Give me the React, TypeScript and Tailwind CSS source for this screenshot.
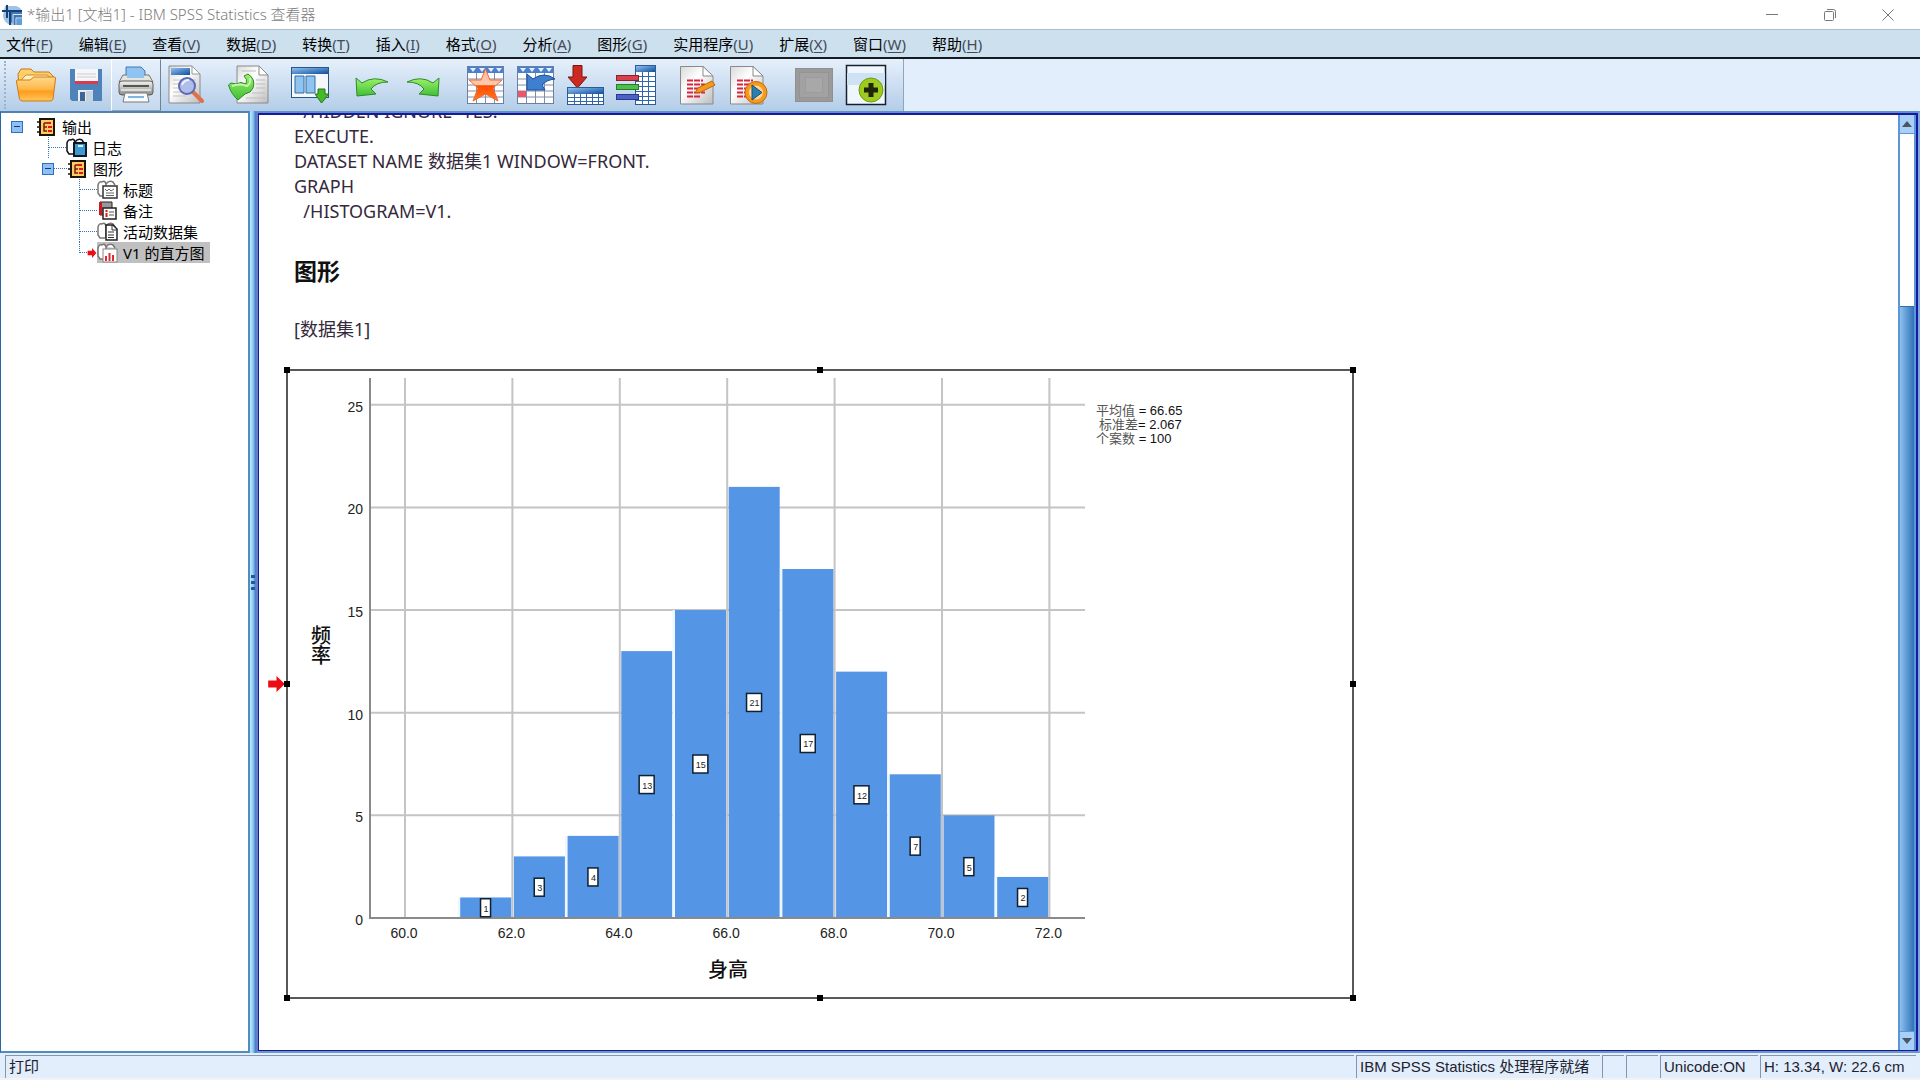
import type { ReactNode } from "react";

const UI_FONT = "font-['Noto_Sans','Noto_Sans_CJK_SC',sans-serif]";
const ARIAL_FONT = "font-['Liberation_Sans','Noto_Sans_CJK_SC',sans-serif]";

const MENUS = [
  { label: "文件", key: "F" },
  { label: "编辑", key: "E" },
  { label: "查看", key: "V" },
  { label: "数据", key: "D" },
  { label: "转换", key: "T" },
  { label: "插入", key: "I" },
  { label: "格式", key: "O" },
  { label: "分析", key: "A" },
  { label: "图形", key: "G" },
  { label: "实用程序", key: "U" },
  { label: "扩展", key: "X" },
  { label: "窗口", key: "W" },
  { label: "帮助", key: "H" },
];

const BINS = [
  { start: 61, count: 1 },
  { start: 62, count: 3 },
  { start: 63, count: 4 },
  { start: 64, count: 13 },
  { start: 65, count: 15 },
  { start: 66, count: 21 },
  { start: 67, count: 17 },
  { start: 68, count: 12 },
  { start: 69, count: 7 },
  { start: 70, count: 5 },
  { start: 71, count: 2 },
];

export default function App(): JSX.Element {
  return (
    <div className={`flex h-screen flex-col overflow-hidden bg-white text-black ${UI_FONT}`}>
      <SharedDefs />
      <TitleBar />
      <MenuBar />
      <Toolbar />
      <main className="flex min-h-0 flex-1 bg-[#cfe6fa]">
        <OutlinePane />
        <Splitter />
        <OutputPane />
      </main>
      <StatusBar />
    </div>
  );
}

function TitleBar(): JSX.Element {
  return (
    <header className="flex h-[29px] shrink-0 items-center bg-white pl-0.5">
      <AppIcon />
      <h1 className="ml-[5px] flex-1 text-[15px] font-light text-[#7d7d7d]">*输出1 [文档1] - IBM SPSS Statistics 查看器</h1>
      <div className="flex h-full pr-[3px] text-[#777]">
        <WindowButton label="最小化">
          <path d="M0 5.5h12" />
        </WindowButton>
        <WindowButton label="向下还原">
          <rect x="0.5" y="2.5" width="9" height="9" rx="1" />
          <path d="M3 0.5h6.500a2 2 0 0 1 2 2V9" />
        </WindowButton>
        <WindowButton label="关闭">
          <path d="M0.500 0.500l11 11M11.500 0.500l-11 11" />
        </WindowButton>
      </div>
    </header>
  );
}

function WindowButton({ label, children }: { label: string; children: ReactNode }): JSX.Element {
  return (
    <button type="button" aria-label={label} className="flex w-[58px] items-center justify-center">
      <svg className="h-3 w-3 overflow-visible" viewBox="0 0 12 12" fill="none" stroke="currentColor">
        {children}
      </svg>
    </button>
  );
}

function MenuBar(): JSX.Element {
  return (
    <nav className="flex h-[30px] shrink-0 items-center gap-[26px] border-t border-b-2 border-t-[#a9bdcb] border-b-[#151b22] bg-[#cde0ee] pl-1.5">
      {MENUS.map((menu) => (
        <button key={menu.key} type="button" className="text-[15px] leading-5 whitespace-nowrap">
          {menu.label}
          <span className="text-[#444a58]">
            (<span className="underline underline-offset-2">{menu.key}</span>)
          </span>
        </button>
      ))}
    </nav>
  );
}

function Toolbar(): JSX.Element {
  return (
    <div className="flex h-[52px] shrink-0 bg-[#e2eefb]">
      <div className="flex gap-3 border-r border-[#8fa5bc] bg-linear-to-b from-[#e6f0fb] to-[#b3cde8] pr-4">
        <div className="flex">
          <div className="my-0.5 ml-1 w-[7px] border-l-2 border-dotted border-[#9fb3c8]" />
          <ToolButton label="打开"><OpenIcon /></ToolButton>
          <ToolButton label="保存"><SaveIcon /></ToolButton>
          <ToolButton label="打印" raised><PrintIcon /></ToolButton>
          <ToolButton label="打印预览"><PreviewIcon /></ToolButton>
        </div>
        <ToolButton label="导出"><ExportIcon /></ToolButton>
        <ToolButton label="重新调用对话框"><RecallIcon /></ToolButton>
        <div className="flex">
          <ToolButton label="撤销"><UndoIcon /></ToolButton>
          <ToolButton label="重做"><RedoIcon /></ToolButton>
        </div>
        <div className="flex">
          <ToolButton label="转到数据"><StarGridIcon /></ToolButton>
          <ToolButton label="转到个案"><CaseIcon /></ToolButton>
          <ToolButton label="转到变量"><GotoVariableIcon /></ToolButton>
          <ToolButton label="变量"><VariablesIcon /></ToolButton>
        </div>
        <div className="flex">
          <ToolButton label="编辑语法"><EditSyntaxIcon /></ToolButton>
          <ToolButton label="运行脚本"><RunScriptIcon /></ToolButton>
        </div>
        <div className="flex pl-1">
          <ToolButton label="指定窗口"><DesignateIcon /></ToolButton>
          <ToolButton label="定制工具栏"><AddIcon /></ToolButton>
        </div>
      </div>
    </div>
  );
}

function ToolButton({ label, raised = false, children }: { label: string; raised?: boolean; children: ReactNode }): JSX.Element {
  return (
    <button
      type="button"
      aria-label={label}
      className={`flex w-[50px] items-center justify-center ${
        raised ? "border border-t-white border-r-[#6f8296] border-b-[#8fa5bc] border-l-white bg-linear-to-b from-[#e6f0fb] to-[#c6d9ed]" : ""
      }`}
    >
      <svg className="h-10 w-10 shrink-0 overflow-visible" viewBox="0 0 40 40" fill="none">
        {children}
      </svg>
    </button>
  );
}

function OutlinePane(): JSX.Element {
  return (
    <aside className="w-[250px] shrink-0 border-t-2 border-r-2 border-b-2 border-l border-t-[#4e82b4] border-r-[#4f8dbd] border-b-[#4f8dbd] border-l-[#2b68a3] bg-white pt-[3px] text-[15px]">
      <TreeRow label="输出" indent="pl-2.5" toggle icon={<BookIcon />} />
      <TreeRow label="日志" indent="pl-[47px]" line icon={<LogIcon />} />
      <TreeRow label="图形" indent="pl-[41px]" toggle line icon={<BookIcon />} />
      <TreeRow label="标题" indent="pl-[78px]" line icon={<TitleIcon />} />
      <TreeRow label="备注" indent="pl-[78px]" line icon={<NotesIcon />} />
      <TreeRow label="活动数据集" indent="pl-[78px]" line icon={<DatasetIcon />} />
      <TreeRow label="V1 的直方图" indent="pl-[78px]" line selected icon={<ChartItemIcon />} />
    </aside>
  );
}

function TreeRow({
  label,
  indent,
  icon,
  toggle = false,
  line = false,
  selected = false,
}: {
  label: string;
  indent: string;
  icon: ReactNode;
  toggle?: boolean;
  line?: boolean;
  selected?: boolean;
}): JSX.Element {
  return (
    <div className={`flex h-[21px] items-center ${indent}`}>
      {toggle ? (
        <button type="button" aria-label="折叠" className="flex h-3 w-3 shrink-0 items-center justify-center border border-[#2f6fc0] bg-[#8fc0f5]">
          <span className="h-px w-1.5 bg-[#143a70]" />
        </button>
      ) : (
        <span className={`w-px shrink-0 self-stretch border-l border-dotted border-[#2f75c4] ${selected ? "mb-2.5" : ""}`} />
      )}
      {line ? (
        <span className={`flex shrink-0 items-center justify-end ${toggle ? "w-[13px]" : "w-[17px]"}`}>
          <span className="flex-1 border-t border-dotted border-[#2f75c4]" />
          {selected ? <RedArrow className="h-2.5 w-2.5" /> : null}
        </span>
      ) : (
        <span className="w-[13px] shrink-0" />
      )}
      <span className={`flex h-[21px] items-center ${selected ? "bg-[#c0c0c0] pr-1.5" : ""}`}>
        <svg className="mr-1 h-5 w-[22px] shrink-0" viewBox="0 0 22 20" fill="none">
          {icon}
        </svg>
        <span className="leading-5 whitespace-nowrap">{label}</span>
      </span>
    </div>
  );
}

function Splitter(): JSX.Element {
  return (
    <div className="flex w-1.5 shrink-0 flex-col items-center justify-center gap-[3px] bg-linear-to-r from-[#c4e8fd] via-[#8fc8f5] to-[#3f74bd]">
      <span className="h-[3px] w-1 bg-[#24579c]" />
      <span className="h-[3px] w-1 bg-[#24579c]" />
      <span className="h-[3px] w-1 bg-[#24579c]" />
    </div>
  );
}

function OutputPane(): JSX.Element {
  return (
    <section className="flex min-w-0 flex-1 border-2 border-t-[#5f93c4] border-r-[#7fa8dc] border-b-[#6b96c6] border-l-[#5f7fc8]">
      <div className="flex min-w-0 flex-1 border border-t-2 border-r-2 border-[#1717a4] bg-white">
        <div className="min-w-0 flex-1 overflow-hidden pl-2">
          <div className="-mt-4 pl-[27px] text-[18px] leading-[25px] text-[#35293b]">
            <pre className={UI_FONT}>{`  /HIDDEN IGNORE=YES.
EXECUTE.
DATASET NAME 数据集1 WINDOW=FRONT.
GRAPH
  /HISTOGRAM=V1.`}</pre>
            <h2 className="mt-[31px] text-[23px] leading-8 font-bold text-[#111]">图形</h2>
            <p className="mt-[30px]">[数据集1]</p>
          </div>
          <div className="mt-[27px] flex items-center">
            <RedArrow className="h-4 w-[19px] shrink-0" />
            <Histogram />
          </div>
        </div>
        <ScrollBar />
      </div>
    </section>
  );
}

// Plot area in chart units: 60.0 sits at x=119, zero at y=549.
const scaleX = (value: number) => 119 + (value - 60) * 53.7;
const scaleY = (count: number) => 549 - count * 20.53;

function Histogram(): JSX.Element {
  const xTicks = [60, 62, 64, 66, 68, 70, 72];
  const yTicks = [0, 5, 10, 15, 20, 25];
  const handles = [
    [1, 1], [534, 1], [1067, 1],
    [1, 315], [1067, 315],
    [1, 629], [534, 629], [1067, 629],
  ];

  return (
    <svg
      className={`h-[630px] w-[1068px] shrink-0 overflow-visible ${ARIAL_FONT}`}
      viewBox="0 0 1068 630"
      role="img"
      aria-label="V1 的直方图"
    >
      <rect x="1" y="1" width="1066" height="628" fill="#fff" stroke="#222" strokeWidth="1.5" />
      {handles.map(([x, y]) => (
        <rect key={`${x}-${y}`} x={x - 3} y={y - 3} width="6" height="6" fill="#000" />
      ))}

      <g stroke="#c4c4c4" strokeWidth="2">
        {xTicks.map((tick) => (
          <line key={tick} x1={scaleX(tick)} x2={scaleX(tick)} y1="9" y2="549" />
        ))}
        {yTicks.slice(1).map((tick) => (
          <line key={tick} x1="84" x2="799" y1={scaleY(tick)} y2={scaleY(tick)} />
        ))}
      </g>

      {BINS.map((bin) => (
        <g key={bin.start}>
          {bin.start % 2 === 1 ? (
            <rect x={scaleX(bin.start) - 1} y={scaleY(bin.count)} width="3" height={scaleY(0) - scaleY(bin.count)} fill="#eef7fd" />
          ) : null}
          <rect
            x={scaleX(bin.start) + 1.5}
            y={scaleY(bin.count)}
            width="51"
            height={scaleY(0) - scaleY(bin.count)}
            fill="#5595e5"
          />
        </g>
      ))}

      <path d="M84 9V549H799" fill="none" stroke="#8a8a8a" strokeWidth="2" />

      {BINS.map((bin) => {
        const cx = scaleX(bin.start + 0.5);
        const cy = scaleY(bin.count / 2);
        const width = bin.count > 9 ? 15 : 10;
        return (
          <g key={bin.start}>
            <rect x={cx - width / 2} y={cy - 9} width={width} height="18" fill="#fff" stroke="#10202f" strokeWidth="1.5" />
            <text x={cx + 0.5} y={cy + 4} textAnchor="middle" fontSize="9" fill="#222">
              {bin.count}
            </text>
          </g>
        );
      })}

      <g fontSize="14" fill="#222">
        {yTicks.map((tick) => (
          <text key={tick} x="77" y={scaleY(tick) + 7} textAnchor="end">
            {tick}
          </text>
        ))}
        {xTicks.map((tick) => (
          <text key={tick} x={scaleX(tick) - 1} y="569" textAnchor="middle">
            {tick.toFixed(1)}
          </text>
        ))}
      </g>

      <g fontSize="20" fontWeight="500" fill="#111" textAnchor="middle">
        <text x="35" y="274">频</text>
        <text x="35" y="294">率</text>
        <text x="442" y="608">身高</text>
      </g>

      <g fontSize="13" fill="#111">
        <text x="810" y="46"><tspan fill="#555">平均值</tspan> = 66.65</text>
        <text x="813" y="60"><tspan fill="#555">标准差</tspan>= 2.067</text>
        <text x="810" y="74"><tspan fill="#555">个案数</tspan> = 100</text>
      </g>
    </svg>
  );
}

function ScrollBar(): JSX.Element {
  return (
    <div className="flex w-[18px] shrink-0 flex-col border-x-2 border-[#5b97d6] bg-white">
      <button type="button" aria-label="向上滚动" className="flex h-[19px] items-center justify-center border-b border-[#5b97d6] bg-[#a9d0f8]">
        <svg className="h-1.5 w-2.5" viewBox="0 0 10 6"><path d="M0 6L5 0L10 6Z" fill="#4c5560" /></svg>
      </button>
      <div className="flex-[172_1_0%]" />
      <div className="flex-[726_1_0%] border-t border-[#2f6cb0] bg-linear-to-r from-[#8cc0ee] to-[#2f72b8]" />
      <button type="button" aria-label="向下滚动" className="flex h-[19px] items-center justify-center border-t border-[#5b97d6] bg-[#a9d0f8]">
        <svg className="h-1.5 w-2.5" viewBox="0 0 10 6"><path d="M0 0L5 6L10 0Z" fill="#4c5560" /></svg>
      </button>
    </div>
  );
}

function StatusBar(): JSX.Element {
  return (
    <footer className={`flex h-[27px] shrink-0 gap-0.5 border-b-2 border-[#f1f3f5] bg-[#e2eefb] pt-0.5 pr-1 pl-[5px] text-[15px] text-[#22222e] ${ARIAL_FONT}`}>
      <StatusCell className="flex-1">打印</StatusCell>
      <StatusCell className="w-[244px]">IBM SPSS Statistics 处理程序就绪</StatusCell>
      <StatusCell className="w-[22px]" />
      <StatusCell className="w-8" />
      <StatusCell className="w-[98px]">Unicode:ON</StatusCell>
      <StatusCell className="w-[156px]">H: 13.34, W: 22.6 cm</StatusCell>
    </footer>
  );
}

function StatusCell({ className, children }: { className: string; children?: ReactNode }): JSX.Element {
  return (
    <div className={`flex shrink-0 items-center border-t border-l border-[#8496ae] pl-[3px] whitespace-nowrap ${className}`}>
      {children}
    </div>
  );
}

/* ---------- icons ---------- */

function SharedDefs(): JSX.Element {
  return (
    <svg className="absolute h-0 w-0" aria-hidden="true">
      <defs>
        <linearGradient id="folder" x1="0" y1="0" x2="0" y2="1">
          <stop offset="0" stopColor="#ffd98a" />
          <stop offset="0.5" stopColor="#ffb84a" />
          <stop offset="0.6" stopColor="#ff9d1c" />
          <stop offset="1" stopColor="#ffc65c" />
        </linearGradient>
        <linearGradient id="page" x1="0" y1="0" x2="1" y2="1">
          <stop offset="0" stopColor="#d9d9d9" />
          <stop offset="0.4" stopColor="#ffffff" />
          <stop offset="1" stopColor="#bdbdbd" />
        </linearGradient>
        <linearGradient id="blueBar" x1="0" y1="0" x2="1" y2="1">
          <stop offset="0" stopColor="#8fc0f0" />
          <stop offset="1" stopColor="#0f4f9e" />
        </linearGradient>
        <linearGradient id="greenFill" x1="0" y1="0" x2="0" y2="1">
          <stop offset="0" stopColor="#9df26a" />
          <stop offset="1" stopColor="#3fbf35" />
        </linearGradient>
        <linearGradient id="starFill" x1="0" y1="0" x2="0" y2="1">
          <stop offset="0" stopColor="#ffb9a0" />
          <stop offset="0.5" stopColor="#ffc9ae" />
          <stop offset="0.52" stopColor="#ff4a00" />
          <stop offset="1" stopColor="#ff7a1c" />
        </linearGradient>
        <linearGradient id="metal" x1="0" y1="0" x2="0" y2="1">
          <stop offset="0" stopColor="#f4f4f4" />
          <stop offset="1" stopColor="#8b8b8b" />
        </linearGradient>
      </defs>
    </svg>
  );
}

function AppIcon(): JSX.Element {
  return (
    <svg className="h-5 w-5 shrink-0" viewBox="0 0 20 20">
      <path d="M3 1H14Q20 2 20 9V20H8Q1 17 1 10Z" fill="#9cc4e6" />
      <path d="M8 6H20V20H12Q8 17 8 12Z" fill="#3f77b5" />
      <path d="M5 0V13M0 6H8M8 20V6H20" stroke="#173f78" strokeWidth="2" fill="none" />
      <path d="M11 20V9.500H20M14 20V13H20" stroke="#dbeaf7" fill="none" />
      <path d="M15 14H20V20H15Z" fill="#5fa0da" />
    </svg>
  );
}

function OpenIcon() {
  return (
    <>
      <path d="M2 9L5 4H15L18 7H33L37 11V22H3Z" fill="#ffd06a" stroke="#c47a1a" />
      <path d="M6 14L10 10H31L35 13V20H6Z" fill="#fff0c0" stroke="#d08a2a" />
      <path d="M1 15H14L18 12H38Q40 12 39.500 14L37 34Q36.500 36 34 36H7Q4 36 3.500 34L0.500 17Q0.300 15 1 15Z" fill="url(#folder)" stroke="#d07a14" />
    </>
  );
}

function SaveIcon() {
  return (
    <>
      <path d="M4 4H36V36H6L4 34Z" fill="#4f82b8" />
      <path d="M9 4H32V19H9Z" fill="#f6f6f8" />
      <path d="M11 9H30M11 12H30" stroke="#c9cdd4" />
      <path d="M9 16H32V19H9Z" fill="#d83a50" />
      <path d="M12 25H27V36H12Z" fill="#e8eef4" />
      <path d="M14 27H19V36H14Z" fill="#3c6694" />
      <path d="M20 26H27V36H20Z" fill="#c6d4e2" />
    </>
  );
}

function PrintIcon() {
  return (
    <>
      <path d="M10 14V2H25L29 6V14Z" fill="#8ec3f2" stroke="#3c7ab8" />
      <path d="M7 10H33L37 17H3Z" fill="#e4e4de" stroke="#77776f" />
      <path d="M11 3H24L28 7V13H11Z" fill="#8ec3f2" />
      <rect x="3" y="16" width="34" height="14" rx="3" fill="url(#metal)" stroke="#5c5c58" />
      <path d="M7 21H33" stroke="#55554f" strokeWidth="2" />
      <path d="M5 25H35" stroke="#deded8" strokeWidth="2" />
      <path d="M9 28H31L33 37H7Z" fill="#f8fbfe" stroke="#7a7a76" />
      <path d="M12 32H28" stroke="#7fb4e4" strokeWidth="2" />
    </>
  );
}

function PreviewIcon() {
  return (
    <>
      <path d="M3 1H26L34 9V38H3Z" fill="url(#page)" stroke="#8a8a8a" />
      <path d="M5 3H24V10H5Z" fill="url(#blueBar)" />
      <path d="M26 1V9H34Z" fill="#fff" stroke="#9a9a9a" />
      <path d="M7 15H30M7 19H30M7 23H30M7 27H20M7 31H20" stroke="#c4c4c4" />
      <path d="M27 27L36 36" stroke="#e07048" strokeWidth="4" strokeLinecap="round" />
      <circle cx="21" cy="21" r="8" fill="#a9b9ea" fillOpacity="0.9" stroke="#5a6ab4" strokeWidth="2" />
      <path d="M16 20Q18 15 23 15" stroke="#eef2ff" strokeWidth="2" />
    </>
  );
}

function ExportIcon() {
  return (
    <>
      <path d="M9 1H31L40 10V38H9Z" fill="url(#page)" stroke="#8a8a8a" />
      <path d="M31 1V10H40Z" fill="#fff" stroke="#8a8a8a" />
      <path d="M14 6H28M28 15H37M28 19H37M28 23H37M24 28H37M18 33H37" stroke="#bdbdbd" />
      <path d="M0.500 20L3 18L8 19Q13 16 18 19Q20 14 16 11L20 9Q28 14 25 23Q23 28 17 29L10 35Q3 29 0.500 20Z" fill="url(#greenFill)" stroke="#2f8a2a" />
      <path d="M4 21Q12 18 19 21Q23 19 22 13" stroke="#c9f7ae" strokeWidth="2" />
    </>
  );
}

function RecallIcon() {
  return (
    <>
      <rect x="1.500" y="2.500" width="37" height="30" fill="#f4f8fc" stroke="#2a5684" />
      <rect x="2" y="3" width="36" height="6" fill="url(#blueBar)" />
      <path d="M5 11H14V28H5ZM16 11H25V28H16Z" fill="#8fc4ee" stroke="#2f6da6" />
      <path d="M28 24H35V29H39L31.500 38L25 29H28Z" fill="#45bb2a" stroke="#27751a" />
    </>
  );
}

function UndoIcon() {
  return <path d="M4 13L10 18Q22 10 36 17Q24 17 19 24L24 29L5 31Z" fill="url(#greenFill)" stroke="#2f8a2a" />;
}

function RedoIcon() {
  return <path d="M37 13L31 18Q19 10 5 17Q17 17 22 24L17 29L36 31Z" fill="url(#greenFill)" stroke="#2f8a2a" />;
}

function GridBase() {
  return (
    <>
      <rect x="3.500" y="1.500" width="36" height="37" fill="#fff" stroke="#6b7f9e" />
      <rect x="4" y="2" width="35" height="6" fill="#4a7fd0" />
      <path d="M6 3L9 7L12 3M15 3L18 7L21 3M24 3L27 7L30 3M32 3L35 7L38 3" fill="#e4efff" />
      <path d="M4 14H39M4 20H39M4 26H39M4 32H39M12.500 8V38M21.500 8V38M30.500 8V38" stroke="#7f8da8" />
    </>
  );
}

function StarGridIcon() {
  return (
    <>
      <GridBase />
      <path d="M21.500 4L26 15H38L29 23L34 36L21.500 29L9 36L14 23L5 15H17Z" fill="url(#starFill)" stroke="#f06a3a" />
    </>
  );
}

function CaseIcon() {
  return (
    <>
      <GridBase />
      <path d="M4 26H12V32H4Z" fill="#f0546a" />
      <path d="M13 9L19 14Q30 6 41 14Q32 15 28 20L31 25H13Z" fill="#3f7fd0" stroke="#1d4f94" />
    </>
  );
}

function GotoVariableIcon() {
  return (
    <>
      <path d="M9 0.500H18V12H23L13.500 23L4 12H9Z" fill="#cc2a20" stroke="#7a1510" />
      <rect x="3.500" y="22.500" width="36" height="17" fill="#fff" stroke="#2b5c98" />
      <rect x="4" y="23" width="35" height="6" fill="url(#blueBar)" />
      <path d="M4 32.500H39M4 36.500H39M10.500 29V39M16.500 29V39M22.500 29V39M28.500 29V39M34.500 29V39" stroke="#2f66ac" />
    </>
  );
}

function VariablesIcon() {
  return (
    <>
      <rect x="21.500" y="0.500" width="20" height="39" fill="#fff" stroke="#2b5c98" />
      <rect x="22" y="1" width="19" height="6" fill="url(#blueBar)" />
      <path d="M22 11.500H41M22 16.500H41M22 21.500H41M22 26.500H41M22 31.500H41M22 35.500H41M28.500 7V39M34.500 7V39" stroke="#2f66ac" />
      <rect x="2.500" y="10.500" width="22" height="5" fill="#d8404a" stroke="#8a2030" />
      <rect x="2.500" y="19.500" width="22" height="5" fill="#4cc04a" stroke="#2a7a2c" />
      <rect x="2.500" y="29.500" width="22" height="5" fill="#4a62c8" stroke="#2a3a88" />
    </>
  );
}

function SyntaxPage() {
  return (
    <>
      <path d="M4.500 1.500H27L37 11V39H4.500Z" fill="url(#page)" stroke="#8a8a8a" />
      <path d="M27 1.500V11H37Z" fill="#fff" stroke="#8a8a8a" />
      <path d="M11 15.500H27M11 19.500H29M11 23.500H25M11 27.500H29M11 31.500H24" stroke="#d8243c" strokeWidth="2" strokeDasharray="6 1" />
    </>
  );
}

function EditSyntaxIcon() {
  return (
    <>
      <SyntaxPage />
      <path d="M19 28L22 23L36 16L39 20L25 27Z" fill="#f79a1c" stroke="#b8640c" />
    </>
  );
}

function RunScriptIcon() {
  return (
    <>
      <SyntaxPage />
      <circle cx="30" cy="27.500" r="11" fill="#f7991c" stroke="#c06a10" />
      <circle cx="30" cy="27.500" r="7" fill="#ffd79a" />
      <path d="M26 20L36 27.500L26 35Z" fill="#2a7fae" stroke="#1c4f70" />
    </>
  );
}

function DesignateIcon() {
  return (
    <>
      <rect x="3.500" y="3.500" width="37" height="33" fill="#9a9a9a" stroke="#909090" />
      <rect x="7.500" y="7.500" width="29" height="25" fill="#a2a2a2" stroke="#949494" />
      <rect x="13.500" y="12.500" width="17" height="15" fill="#a8a8a8" stroke="#9c9c9c" />
    </>
  );
}

function AddIcon() {
  return (
    <>
      <rect x="4.500" y="0.500" width="39" height="39" fill="#f0f6fd" stroke="#16202e" strokeWidth="1.500" />
      <path d="M5 8H43V20H5Z" fill="#cfe2f5" />
      <circle cx="29" cy="25" r="12" fill="#9dcc1f" stroke="#6f9a10" />
      <path d="M26.500 18H31.500V22.500H36V27.500H31.500V32H26.500V27.500H22V22.500H26.500Z" fill="#20260c" />
    </>
  );
}

function RedArrow({ className }: { className: string }): JSX.Element {
  return (
    <svg className={className} viewBox="0 0 16 14" preserveAspectRatio="none">
      <path d="M1 4H8V0L15 7L8 14V10H1Z" fill="#ee0c14" />
    </svg>
  );
}

function BookIcon() {
  return (
    <>
      <rect x="4" y="2" width="14" height="16" fill="#ffca62" stroke="#1b1408" strokeWidth="2" />
      <path d="M1 5H5M1 10H5M1 15H5" stroke="#1b1408" strokeWidth="1.500" />
      <path d="M8 6V14H11M8 10H11M8 6H11" stroke="#7a1f10" strokeWidth="1.500" />
      <path d="M11 6H15M12 10H16M12 14H16" stroke="#e01818" strokeWidth="2" />
    </>
  );
}

function BindingBase({ color = "#777" }: { color?: string }) {
  return <path d="M8 16H3L1 13V5Q2 1 5 2Q8 0 9 4V16M9 4Q12 0 16 2L18 5" fill="#fff" stroke={color} strokeWidth="1.500" />;
}

function LogIcon() {
  return (
    <>
      <BindingBase color="#111" />
      <rect x="8" y="5" width="12" height="13" fill="#3f9ad0" stroke="#0c1a26" strokeWidth="2" />
      <path d="M12 8H17" stroke="#d8f0ff" strokeWidth="2" />
    </>
  );
}

function TitleIcon() {
  return (
    <>
      <BindingBase />
      <rect x="6" y="6" width="14" height="12" fill="#fff" stroke="#333" strokeWidth="1.500" />
      <path d="M8 9L10 11L12 9L14 11L17 9M9 13H17M9 15.500H17" stroke="#666" />
    </>
  );
}

function NotesIcon() {
  return (
    <>
      <path d="M3 1H15V14H3Z" fill="#999" stroke="#222" />
      <path d="M2 1H5V14H2Z" fill="#cc1a24" />
      <rect x="6" y="7" width="13" height="11" fill="#fff" stroke="#222" strokeWidth="1.500" />
      <path d="M9.500 9V11M9.500 12V16" stroke="#e01818" strokeWidth="2" />
      <path d="M12 11H17M12 14H17" stroke="#555" />
    </>
  );
}

function DatasetIcon() {
  return (
    <>
      <BindingBase />
      <path d="M9 3H16L20 7V18H9Z" fill="#fff" stroke="#222" strokeWidth="1.500" />
      <path d="M15 3V8H20M11 10H17M11 13H17M11 15.500H17" stroke="#333" />
    </>
  );
}

function ChartItemIcon() {
  return (
    <>
      <BindingBase />
      <rect x="6" y="6" width="14" height="13" fill="#fff" stroke="#888" />
      <path d="M9 18V13M12.500 18V10M16 18V12" stroke="#e02a30" strokeWidth="2" />
    </>
  );
}
